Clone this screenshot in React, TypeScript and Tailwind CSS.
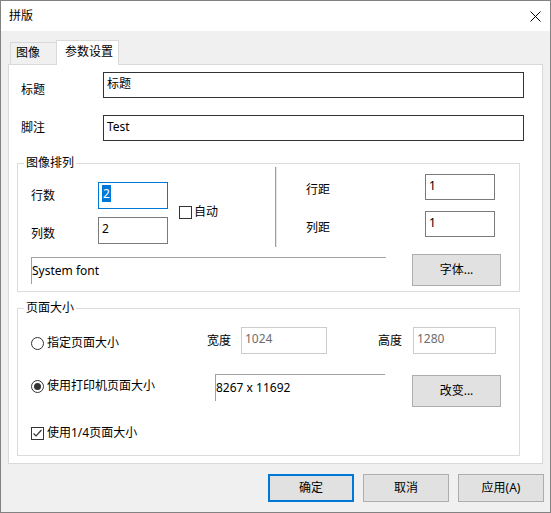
import React from 'react';

function Check({ checked }: { checked?: boolean }) {
  return (
    <div className="w-[13px] h-[13px] border border-[#333333] bg-white flex items-center justify-center shrink-0">
      {checked &&
      <svg width="11" height="11" viewBox="0 0 11 11">
          <polyline points="1.5,5.5 4,8 9.5,2" fill="none" stroke="#333333" strokeWidth="1.2" />
        </svg>
      }
    </div>);

}

function Radio({ checked }: { checked?: boolean }) {
  return (
    <div className="w-[13px] h-[13px] rounded-full border border-[#333333] bg-white flex items-center justify-center shrink-0">
      {checked && <div className="w-[7px] h-[7px] rounded-full bg-[#333333]" />}
    </div>);

}

function Btn({ label, className = '' }: { label: string; className?: string }) {
  return (
    <div className={`bg-[#e1e1e1] border border-[#adadad] flex items-center justify-center leading-[16px] ${className}`}>
      {label}
    </div>);

}

function Legend({ text }: { text: string }) {
  return (
    <div className="absolute left-[6px] -top-[9px] bg-white px-[2px] leading-[16px]">
      {text}
    </div>);

}

export default function App() {
  return (
    <div className="w-[551px] h-[513px] border border-[#828282] bg-[#f0f0f0] flex flex-col text-[12px] text-black font-['Noto_Sans','Noto_Sans_CJK_SC',sans-serif]">
      {/* Title bar */}
      <div className="h-[30px] bg-white flex items-center justify-between pl-[8px] pr-[9px]">
        <span className="leading-[16px]">拼版</span>
        <svg width="11" height="11" viewBox="0 0 11 11">
          <path d="M0.5 0.5 L10.5 10.5 M10.5 0.5 L0.5 10.5" stroke="#000" strokeWidth="1" />
        </svg>
      </div>

      <div className="flex flex-col px-[7px]">
        {/* Tabs */}
        <div className="flex items-end pl-[2px] mt-[9px] h-[24px]">
          <div className="w-[46px] h-[22px] border border-r-0 border-b-0 border-[#d9d9d9] pl-[5px] pt-[2px] leading-[16px]">
            图像
          </div>
          <div className="w-[63px] h-[25px] -mb-px relative z-10 bg-white border border-b-0 border-[#d9d9d9] pl-[8px] pt-[3px] leading-[16px]">
            参数设置
          </div>
        </div>

        {/* Panel */}
        <div className="h-[400px] bg-white border border-[#d9d9d9] flex flex-col">
          <div className="flex mt-[7px]">
            <div className="w-[94px] pl-[12px] pt-[10px] leading-[16px]">标题</div>
            <div className="w-[421px] h-[26px] border border-[#333333] px-[3px] pt-[3px] leading-[16px]">标题</div>
          </div>
          <div className="flex mt-[17px]">
            <div className="w-[94px] pl-[12px] pt-[5px] leading-[16px]">脚注</div>
            <div className="w-[421px] h-[26px] border border-[#333333] px-[3px] pt-[3px] leading-[16px]">Test</div>
          </div>

          {/* 图像排列 */}
          <div className="relative ml-[8px] mt-[22px] w-[503px] h-[129px] border border-[#dcdcdc]">
            <Legend text="图像排列" />
            <div className="flex items-start">
              <div className="ml-[13px] mt-[18px] w-[244px] flex items-start">
                <div className="flex flex-col gap-[8px]">
                  <div className="flex">
                    <div className="w-[67px] pt-[6px] leading-[16px]">行数</div>
                    <div className="w-[70px] h-[27px] border border-[#0078d7] px-[3px] pt-[2px]">
                      <span className="bg-[#0078d7] text-white leading-[17px] inline-block px-[1px]">2</span>
                    </div>
                  </div>
                  <div className="flex">
                    <div className="w-[67px] pt-[9px] leading-[16px]">列数</div>
                    <div className="w-[70px] h-[27px] border border-[#7a7a7a] px-[3px] pt-[3px] leading-[16px]">2</div>
                  </div>
                </div>
                <div className="ml-[11px] mt-[22px] flex items-center gap-[2px]">
                  <Check />
                  <span className="leading-[16px]">自动</span>
                </div>
              </div>
              <div className="mt-[3px] h-[80px] w-[2px] border-l border-[#a0a0a0] border-r border-r-[#e3e3e3]" />
              <div className="ml-[29px] mt-[10px] flex flex-col gap-[11px]">
                <div className="flex">
                  <div className="w-[119px] pt-[8px] leading-[16px]">行距</div>
                  <div className="w-[70px] h-[26px] border border-[#7a7a7a] px-[3px] pt-[3px] leading-[16px]">1</div>
                </div>
                <div className="flex">
                  <div className="w-[119px] pt-[9px] leading-[16px]">列距</div>
                  <div className="w-[70px] h-[26px] border border-[#7a7a7a] px-[3px] pt-[3px] leading-[16px]">1</div>
                </div>
              </div>
            </div>
            <div className="flex items-start mt-[7px]">
              <div className="ml-[13px] mt-[3px] w-[355px] h-[27px] border-t border-l border-[#a0a0a0] pt-[5px] leading-[16px]">
                System font
              </div>
              <Btn label="字体..." className="ml-[26px] w-[89px] h-[32px]" />
            </div>
          </div>

          {/* 页面大小 */}
          <div className="relative ml-[8px] mt-[16px] w-[503px] h-[148px] border border-[#dcdcdc]">
            <Legend text="页面大小" />
            <div className="flex items-start mt-[18px]">
              <div className="ml-[13px] mt-[8px] w-[176px] flex items-center gap-[3px]">
                <Radio />
                <span className="leading-[16px]">指定页面大小</span>
              </div>
              <div className="w-[34px] pt-[6px] leading-[16px]">宽度</div>
              <div className="w-[86px] h-[27px] border border-[#cccccc] text-[#6d6d6d] px-[3px] pt-[3px] leading-[16px]">1024</div>
              <div className="ml-[51px] w-[35px] pt-[6px] leading-[16px]">高度</div>
              <div className="w-[83px] h-[27px] border border-[#cccccc] text-[#6d6d6d] px-[3px] pt-[3px] leading-[16px]">1280</div>
            </div>
            <div className="flex items-start mt-[20px]">
              <div className="ml-[13px] mt-[4px] w-[184px] flex items-center gap-[3px]">
                <Radio checked />
                <span className="leading-[16px]">使用打印机页面大小</span>
              </div>
              <div className="w-[170px] h-[27px] border-t border-l border-[#a0a0a0] pt-[5px] leading-[16px]">
                8267 x 11692
              </div>
              <Btn label="改变..." className="ml-[27px] mt-[1px] w-[89px] h-[32px]" />
            </div>
            <div className="ml-[13px] mt-[18px] flex items-center gap-[3px]">
              <Check checked />
              <span className="leading-[16px]">使用1/4页面大小</span>
            </div>
          </div>
        </div>

        {/* Buttons */}
        <div className="flex justify-end gap-[9px] mt-[10px] -mr-[1px]">
          <div className="w-[86px] h-[28px] bg-[#e1e1e1] border-2 border-[#0078d7] flex items-center justify-center leading-[16px]">
            确定
          </div>
          <Btn label="取消" className="w-[86px] h-[28px]" />
          <Btn label="应用(A)" className="w-[86px] h-[28px]" />
        </div>
      </div>
    </div>);

}
